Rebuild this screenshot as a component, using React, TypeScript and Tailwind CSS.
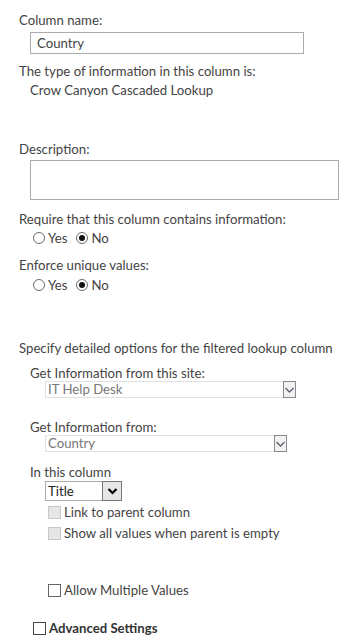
import React from "react";

function Chevron({ dark }: { dark?: boolean }) {
  return (
    <svg width="11" height="8" viewBox="0 0 11 8" fill="none">
      <path
        d="M1.5 2 L5.5 6 L9.5 2"
        stroke={dark ? "#000" : "#5a6470"}
        strokeWidth={dark ? 2.2 : 1.4}
      />
    </svg>
  );
}

function Radio({ checked }: { checked?: boolean }) {
  return (
    <span className="flex h-[12px] w-[12px] items-center justify-center rounded-full border border-[#6b6b6b] bg-white">
      {checked && <span className="h-[6px] w-[6px] rounded-full bg-[#111]" />}
    </span>
  );
}

function YesNo({ top }: { top: string }) {
  return (
    <div className={`ml-[14px] flex h-[18px] items-center ${top}`}>
      <Radio />
      <span className="ml-[3px]">Yes</span>
      <span className="ml-[9px]">
        <Radio checked />
      </span>
      <span className="ml-[3px]">No</span>
    </div>
  );
}

function Check({ disabled, dark }: { disabled?: boolean; dark?: boolean }) {
  return (
    <span
      className={`inline-block h-[13px] w-[13px] ${
        disabled
          ? "border border-[#c8c8c8] bg-[#e6e6e6]"
          : dark
          ? "border border-[#444] bg-white"
          : "border border-[#666] bg-white"
      }`}
    />
  );
}

function GraySelect({ value, width }: { value: string; width: string }) {
  return (
    <div className={`ml-[26px] flex h-[17px] items-stretch border border-[#e1e1e1] bg-white ${width}`}>
      <span className="flex-1 pl-[2px] leading-[15px] text-[#777]">{value}</span>
      <span className="flex w-[13px] items-center justify-center border border-[#8a8a8a] bg-[#f2f2f2] -my-px -mr-px">
        <Chevron />
      </span>
    </div>
  );
}

export default function App() {
  return (
    <div
      className="min-h-screen bg-white pl-[19px] pt-[11px] text-[13.2px] leading-[18px] text-[#444]"
      style={{ fontFamily: "Lato, 'Open Sans', sans-serif" }}
    >
      <div>Column name:</div>
      <div className="ml-[11px] mt-[3px] flex h-[22px] w-[274px] items-center border border-[#ababab] pl-[6px]">
        Country
      </div>
      <div className="mt-[8px]">The type of information in this column is:</div>
      <div className="ml-[11px] mt-[1px]">Crow Canyon Cascaded Lookup</div>

      <div className="mt-[41px]">Description:</div>
      <div className="ml-[11px] mt-[2px] h-[40px] w-[309px] border border-[#ababab]" />

      <div className="mt-[10px]">Require that this column contains information:</div>
      <YesNo top="mt-[1px]" />
      <div className="mt-[9px]">Enforce unique values:</div>
      <YesNo top="mt-[2px]" />

      <div className="mt-[45px]">Specify detailed options for the filtered lookup column</div>
      <div className="ml-[11px] mt-[8px] leading-[16px]">Get Information from this site:</div>
      <GraySelect value="IT Help Desk" width="w-[251px]" />
      <div className="ml-[11px] mt-[21px] leading-[16px]">Get Information from:</div>
      <GraySelect value="Country" width="w-[242px]" />

      <div className="ml-[11px] mt-[12px] leading-[16px]">In this column</div>
      <div className="ml-[26px] mt-[1px] flex h-[20px] w-[77px] items-stretch border border-[#ababab] bg-white">
        <span className="flex-1 pl-[2px] leading-[18px] text-[#222]">Title</span>
        <span className="flex w-[20px] items-center justify-center border border-[#777] bg-[#e6e6e6] -my-px -mr-px">
          <Chevron dark />
        </span>
      </div>
      <div className="ml-[29px] mt-[2px] flex h-[18px] items-center gap-[3px]">
        <Check disabled />
        <span>Link to parent column</span>
      </div>
      <div className="ml-[29px] mt-[3px] flex h-[18px] items-center gap-[3px]">
        <Check disabled />
        <span>Show all values when parent is empty</span>
      </div>

      <div className="ml-[29px] mt-[39px] flex h-[18px] items-center gap-[3px]">
        <Check />
        <span>Allow Multiple Values</span>
      </div>
      <div className="ml-[14px] mt-[20px] flex h-[18px] items-center gap-[3px]">
        <Check dark />
        <span className="font-bold text-[#333]">Advanced Settings</span>
      </div>
    </div>
  );
}
